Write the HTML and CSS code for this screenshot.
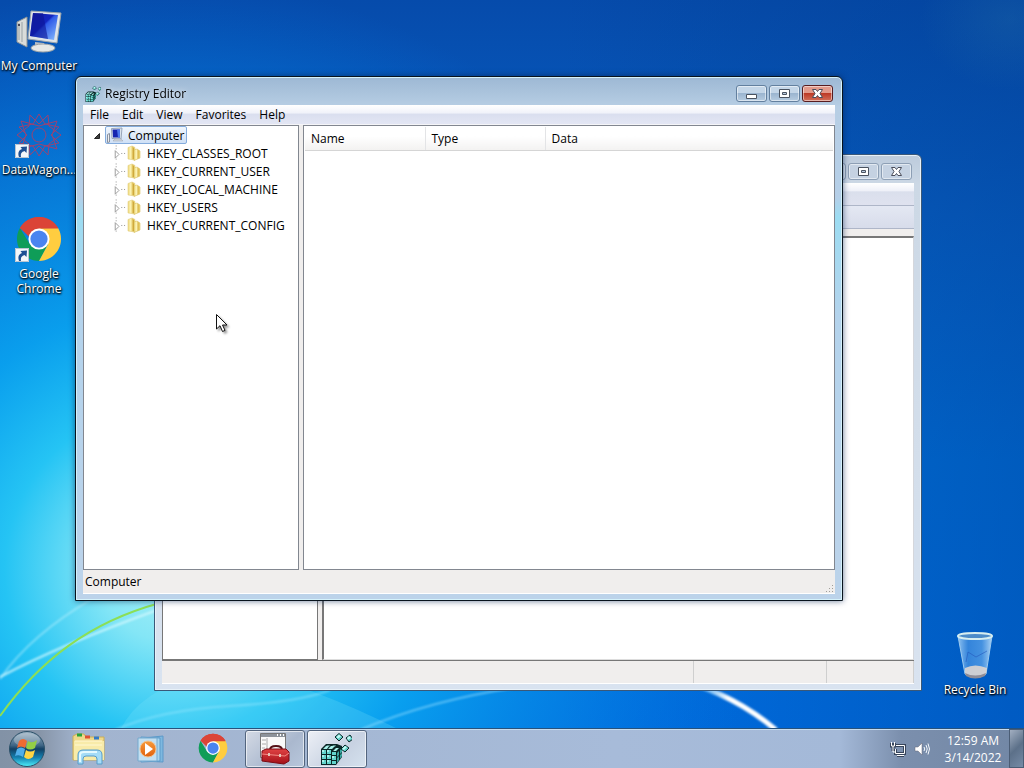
FILE: index.html
```html
<!DOCTYPE html>
<html lang="en">
<head>
<meta charset="utf-8">
<title>Desktop</title>
<link rel="stylesheet" href="styles.css">
</head>
<body>
<svg class="defs" aria-hidden="true">
  <defs>
    <linearGradient id="screen" x1="0" y1="0" x2="1" y2="1"><stop offset="0" stop-color="#1420a8"/><stop offset=".45" stop-color="#1326c0"/><stop offset=".5" stop-color="#2f5be8"/><stop offset="1" stop-color="#8cc0ff"/></linearGradient>
    <linearGradient id="folder" x1="0" x2="1"><stop offset="0" stop-color="#ecd77c"/><stop offset=".4" stop-color="#fdf5b8"/><stop offset=".7" stop-color="#dbb94c"/><stop offset="1" stop-color="#f3df83"/></linearGradient>
    <linearGradient id="bin" x1="0" x2="1"><stop offset="0" stop-color="#a9d4f8" stop-opacity=".85"/><stop offset=".3" stop-color="#4a95e4" stop-opacity=".7"/><stop offset=".7" stop-color="#5ba3ea" stop-opacity=".75"/><stop offset="1" stop-color="#bfe0fa" stop-opacity=".9"/></linearGradient>
    <linearGradient id="orb" x1="0" y1="0" x2="0" y2="1"><stop offset="0" stop-color="#9db3c4"/><stop offset=".4" stop-color="#3d6484"/><stop offset=".5" stop-color="#123f63"/><stop offset=".75" stop-color="#1583b3"/><stop offset="1" stop-color="#4ff0fa"/></linearGradient>
    <linearGradient id="play" x1="0" y1="0" x2="0" y2="1"><stop offset="0" stop-color="#f79a3a"/><stop offset="1" stop-color="#e0600c"/></linearGradient>
    <linearGradient id="redbox" x1="0" y1="0" x2="0" y2="1"><stop offset="0" stop-color="#e04343"/><stop offset="1" stop-color="#a30f18"/></linearGradient>
  </defs>
  <symbol id="chrome" viewBox="0 0 48 48">
    <path d="M24 24 4.100 12.500A23 23 0 0 1 43.900 12.500L24 13Z" fill="#db4437"/>
    <path d="M4.100 12.500A23 23 0 0 0 24 47L33.500 29.500 14.500 29.500Z" fill="#0f9d58"/>
    <path d="M43.900 12.500A23 23 0 0 1 24 47L33.500 29.500 24 13Z" fill="#ffcd40"/>
    <path d="M24 13H43.900L33 24Z" fill="#ffcd40"/>
    <path d="M4.100 12.500A23 23 0 0 1 43.900 12.500V13H24L14 22Z" fill="#db4437"/>
    <circle cx="24" cy="24" r="11" fill="#fff"/><circle cx="24" cy="24" r="9" fill="#4a84f0"/>
  </symbol>
  <symbol id="shortcut" viewBox="0 0 14 14">
    <path d="M0 0h14v14H0z" fill="#f4f7fa"/><path d="M.5.5h13v13H.5z" fill="none" stroke="#b8c4d0"/>
    <path d="M4 13C2.500 8.500 4 6 7 5L5.500 3 12 2.500 11.500 9 9.500 7C6.500 8 5.500 9.500 6 13Z" fill="#1d4f93"/>
  </symbol>
  <symbol id="regedit" viewBox="0 0 32 32">
    <path d="M1 16 6 11H17L22 13V24L16 32H1Z" fill="#0a2626"/>
    <g fill="#62d4cc">
      <path d="M2 17h4v4H2zM7 17h4v4H7zM2 22h4v4H2zM7 22h4v4H7zM12 23h4v4h-4zM2 27h4v4H2zM7 27h4v4H7zM12 28h4v3h-4z"/>
      <path d="M12 19h4v3h-4z"/>
    </g>
    <g fill="#a9f1ea"><path d="M3 16l3-3h3l-2 3zM8 16l3-3h4l-3 3zM6 12.500h4l-1 1zM12 12.500h4l-1 1zM13 18l3-3h3l-3 3z"/><path d="M2 17h2v2H2zM7 17h2v2H7zM2 22h2v2H2zM7 22h2v2H7zM12 23h2v2h-2zM2 27h2v2H2zM7 27h2v2H7z"/></g>
    <path d="M17 20l2-2v4l-2 2zM20 17l2-2v4l-2 2zM17 25l2-2v4l-2 3zM20 22l2-2v3l-2 3z" fill="#3aa8a2"/>
    <g stroke="#0a2626" fill="#5fcfc8"><path d="M19 .5l4 3.500-4 4-4-4zM30 2l3 4-4 3-3-4zM25 12l4 3-4 4-4-3z"/></g>
    <path d="M19 1.500l2 2-3 2-1.500-1.500zM29 3l2 2-3 2-1-2zM25 13l2 1-3 3-2-1z" fill="#c4fbf5"/>
  </symbol>
  <symbol id="pc" viewBox="0 0 48 48">
    <path d="M2 14 12 9V39L2 34Z" fill="#d9dcda" stroke="#8b9296"/><path d="M4 15v17M7 14v20" stroke="#9aa3a6"/>
    <circle cx="4" cy="17" r="1" fill="#223"/>
    <path d="M20 34 29 35 31 39H20Z" fill="#b9bfc4"/><ellipse cx="28" cy="40" rx="12" ry="4" fill="#e5e8e6" stroke="#9ca3a6"/>
    <path d="M16 3 46 5 42 35 13 31Z" fill="#dfe4e8" stroke="#9aa4ac"/><path d="M18 5 43 7 39 32 15 28Z" fill="url(#screen)"/>
    <path d="M18 5h10l5 26-18-3z" fill="#0b1494" opacity=".6"/>
  </symbol>
  <symbol id="folder-icon" viewBox="0 0 16 16">
    <path d="M2 2.500 6 1 9 2.500V15L2 14Z" fill="url(#folder)" stroke="#e3cf7d" stroke-width=".6"/>
    <path d="M8 5 11 4 14 6V13L8 15.500Z" fill="url(#folder)" stroke="#d9c060" stroke-width=".6"/>
    <path d="M7.500 3V14" stroke="#cfa93c"/>
  </symbol>
  <symbol id="min" viewBox="0 0 14 14"><path d="M1.500 7.500h10v4h-10z" fill="#fff" stroke="#4a5360"/></symbol>
  <symbol id="max" viewBox="0 0 14 14"><path d="M1.500 2.500h10v8h-10z" fill="#fff" stroke="#4a5360"/><path d="M4.500 5.500h4v2h-4z" fill="#b9cbe0" stroke="#4a5360"/></symbol>
  <symbol id="close" viewBox="0 0 14 14"><path d="M1.500 2.500H5L6.500 4.500 8 2.500H11.500L9 6.500 11.500 10.500H8L6.500 8.500 5 10.500H1.500L4 6.500Z" fill="#fff" stroke="#4a4d5a"/></symbol>
  <symbol id="branch" viewBox="0 0 16 18"><path d="M5.500 1V5M5.500 15V18M11 9.500H16" stroke="#888" stroke-dasharray="1 2" fill="none"/><path d="M4.500 6.500 8.500 10.500 4.500 14.500Z" fill="#fff" stroke="#999"/></symbol>
</svg>

<main class="desktop">
  <svg class="wallpaper" viewBox="0 0 1024 768" preserveAspectRatio="none" aria-hidden="true">
    <defs>
      <linearGradient id="sky" x1="0" y1="0" x2="0" y2="1"><stop offset="0" stop-color="#064bab"/><stop offset=".28" stop-color="#075fc4"/><stop offset=".6" stop-color="#0070dc"/><stop offset="1" stop-color="#006fe6"/></linearGradient>
      <radialGradient id="glow" gradientUnits="userSpaceOnUse" cx="170" cy="570" r="590"><stop offset="0" stop-color="#a9f0f7"/><stop offset=".12" stop-color="#84e6f6"/><stop offset=".28" stop-color="#25c4f4"/><stop offset=".45" stop-color="#0aa4f0" stop-opacity=".9"/><stop offset=".72" stop-color="#0686e2" stop-opacity=".6"/><stop offset="1" stop-color="#0070dc" stop-opacity="0"/></radialGradient>
      <linearGradient id="shade" x1="0" x2="1"><stop offset=".55" stop-color="#003a86" stop-opacity="0"/><stop offset="1" stop-color="#003c90" stop-opacity=".4"/></linearGradient>
      <radialGradient id="corner"><stop offset="0" stop-color="#2b78a8" stop-opacity=".25"/><stop offset="1" stop-color="#2b78a8" stop-opacity="0"/></radialGradient>
      <linearGradient id="trail" x1="0" x2="1"><stop offset="0" stop-color="#1fa8ff" stop-opacity=".3"/><stop offset=".5" stop-color="#fff"/></linearGradient>
      <filter id="soft"><feGaussianBlur stdDeviation="1"/></filter>
    </defs>
    <path d="M0 0H1024V768H0Z" fill="url(#sky)"/>
    <path d="M0 0H1024V768H0Z" fill="url(#shade)"/>
    <path d="M0 0H1024V768H0Z" fill="url(#glow)"/>
    <ellipse cx="1010" cy="20" rx="90" ry="70" fill="url(#corner)"/>
    <path d="M120 730Q140 690 200 675T400 730Z" fill="#8be9fa" opacity=".2"/>
    <g fill="none" filter="url(#soft)">
      <path d="M0 677Q60 645 160 609" stroke="#d8faff" stroke-width="2" opacity=".8"/>
      <path d="M0 679Q30 635 95 597" stroke="#c5f5ff" stroke-width="2" opacity=".5"/>
      <path d="M115 730Q160 710 230 706T330 690" stroke="#9aeaff" stroke-width="2" opacity=".5"/>
      <path d="M360 730Q430 700 520 687" stroke="#8fdcff" stroke-width="2" opacity=".6"/>
      <path d="M680 680Q735 695 776 730" stroke="url(#trail)" stroke-width="5"/>
    </g>
    <path d="M0 716C40 660 90 622 160 603" stroke="#8cdf55" stroke-width="2" fill="none"/>
  </svg>

  <nav class="shortcuts" aria-label="Desktop shortcuts">
    <a class="shortcut" href="#computer"><svg class="shortcut-art" viewBox="0 0 48 48"><use href="#pc"/></svg><span>My Computer</span></a>
    <a class="shortcut" href="#datawagon"><svg class="shortcut-art" viewBox="0 0 48 48">
      <g fill="none" stroke="#c03a5c" stroke-width="1" opacity=".8">
        <path d="M6 9 24 14 42 9 37 23 42 37 24 32 6 37 11 23ZM24 2 30 12 44 15 36 23 44 31 30 34 24 44 18 34 4 31 12 23 4 15 18 12Z"/>
        <path d="M15 3 24 12 33 3 34 14 46 23 34 32 33 43 24 34 15 43 14 32 2 23 14 14Z"/>
        <circle cx="24" cy="23" r="7"/>
      </g><use href="#shortcut" x="0" y="32" width="14" height="14"/></svg><span>DataWagon...</span></a>
    <a class="shortcut" href="#chrome-app"><svg class="shortcut-art" viewBox="0 0 48 48"><use href="#chrome" x="1" y="0" width="46" height="46"/><use href="#shortcut" x="0" y="32" width="14" height="14"/></svg><span>Google<br>Chrome</span></a>
  </nav>

  <a class="shortcut recycle" href="#bin-folder"><svg class="shortcut-art" viewBox="0 0 48 48">
    <path d="M7 4 41 4 35 42Q25 49 14 42Z" fill="url(#bin)" stroke="#9bcaf0"/>
    <path d="M14 36Q24 31 36 36L35 42Q25 49 14 42Z" fill="#ded6d2" opacity=".9"/><path d="M14 41Q24 46 35 41L34 44Q24 49 15 44Z" fill="#8f8d98"/>
    <path d="M15 30l2-10 8 5 11-6" fill="none" stroke="#2458bd" opacity=".6"/>
    <ellipse cx="24" cy="4" rx="17" ry="3" fill="#4c8cc9" stroke="#d6eef0" stroke-width="2"/></svg><span>Recycle Bin</span></a>

  <section class="window window-back" aria-label="Background window">
    <header class="titlebar">
      <div class="controls">
        <button class="control" aria-label="Minimize"><svg><use href="#min"/></svg></button>
        <button class="control" aria-label="Maximize"><svg><use href="#max"/></svg></button>
        <button class="control" aria-label="Close"><svg><use href="#close"/></svg></button>
      </div>
    </header>
    <div class="client">
      <div class="strip strip-menu"></div>
      <div class="strip strip-tools"></div>
      <div class="back-panes"><div class="back-tree"></div><div class="back-list"></div></div>
      <footer class="back-status"><span></span><span></span><span></span></footer>
    </div>
  </section>

  <section class="window window-main" aria-label="Registry Editor">
    <header class="titlebar">
      <svg class="title-icon"><use href="#regedit"/></svg>
      <h1 class="title">Registry Editor</h1>
      <div class="controls">
        <button class="control" aria-label="Minimize"><svg><use href="#min"/></svg></button>
        <button class="control" aria-label="Maximize"><svg><use href="#max"/></svg></button>
        <button class="control control-close" aria-label="Close"><svg><use href="#close"/></svg></button>
      </div>
    </header>
    <div class="client">
      <nav class="menubar"><button>File</button><button>Edit</button><button>View</button><button>Favorites</button><button>Help</button></nav>
      <div class="panes">
        <ul class="tree">
          <li class="root"><svg class="arrow" viewBox="0 0 8 8"><path d="M6.500 2.500V7.500H1.500Z" fill="#404040" stroke="#222"/></svg><button class="node node-selected"><svg class="node-icon" viewBox="0 0 20 16"><path d="M1.500 7.500 3.500 6.500V15L1.500 15.500Z" fill="#eee" stroke="#8790a0"/><path d="M5.500 1.500 16 1 15 12 6 11.500Z" fill="#dbe4ee" stroke="#98a5b8"/><path d="M6.500 2.500H14V10.500H7Z" fill="#1625b0"/><path d="M11 2.500H14V10.500H12Z" fill="#4d78ec"/><path d="M9 12h6l2 2H7z" fill="#d0d5dc" stroke="#9ba2ae" stroke-width=".5"/></svg>Computer</button></li>
          <li class="key"><svg class="branch"><use href="#branch"/></svg><button class="node"><svg class="folder"><use href="#folder-icon"/></svg>HKEY_CLASSES_ROOT</button></li>
          <li class="key"><svg class="branch"><use href="#branch"/></svg><button class="node"><svg class="folder"><use href="#folder-icon"/></svg>HKEY_CURRENT_USER</button></li>
          <li class="key"><svg class="branch"><use href="#branch"/></svg><button class="node"><svg class="folder"><use href="#folder-icon"/></svg>HKEY_LOCAL_MACHINE</button></li>
          <li class="key"><svg class="branch"><use href="#branch"/></svg><button class="node"><svg class="folder"><use href="#folder-icon"/></svg>HKEY_USERS</button></li>
          <li class="key"><svg class="branch"><use href="#branch"/></svg><button class="node"><svg class="folder"><use href="#folder-icon"/></svg>HKEY_CURRENT_CONFIG</button></li>
        </ul>
        <div class="list">
          <table class="values"><thead><tr><th class="col">Name</th><th class="col">Type</th><th>Data</th></tr></thead></table>
        </div>
      </div>
      <footer class="status"><span>Computer</span><svg class="grip" viewBox="0 0 9 9"><path d="M7 1h1v1H7zM4 4h1v1H4zM7 4h1v1H7zM1 7h1v1H1zM4 7h1v1H4zM7 7h1v1H7z" fill="#a09d98"/></svg></footer>
    </div>
  </section>
  <svg class="cursor" viewBox="0 0 14 20" aria-hidden="true"><path d="M1.500 1.500V16L5 12.700 7.500 18.500 10 17.400 7.500 12H12Z" fill="#fff" stroke="#111"/></svg>
</main>

<footer class="taskbar">
  <button class="start" aria-label="Start"><svg viewBox="0 0 38 38"><circle cx="19" cy="19" r="17.500" fill="url(#orb)" stroke="#2b5068"/><ellipse cx="19" cy="10" rx="13" ry="7" fill="#fff" opacity=".25"/>
    <path d="M11 11Q15 7 19 11L17 18Q13 15 9 18Z" fill="#ef6b32"/><path d="M20 11Q24 14 29 10L27 18Q22 21 18 18Z" fill="#93ce45"/><path d="M9 19Q13 16 17 19L15 27Q11 24 7 26Z" fill="#50aeea"/><path d="M18 20Q22 23 27 20L25 27Q20 31 16 27Z" fill="#ffd544"/></svg></button>
  <div class="tasks">
    <button class="task" aria-label="Windows Explorer"><svg viewBox="0 0 36 36"><path d="M2 5 6 3H13L15 6H33V29H2Z" fill="#efd88a" stroke="#c9ad58"/><path d="M6 4h5" stroke="#28a33b" stroke-width="3"/><path d="M14 6h5" stroke="#df5131" stroke-width="3"/><path d="M23 7h5" stroke="#337ac8" stroke-width="3"/><path d="M3 10H33V29H3Z" fill="#f8eba9"/><path d="M4 10h27M4 14h27" stroke="#fff8d3"/><path d="M7 33V24Q7 19 12 19H26Q31 19 31 24V33H26V28Q26 25 23 25H15Q12 25 12 28V33Z" fill="#a5dcf7" stroke="#569cc9"/><path d="M9 31V24Q9 21 13 21H26" fill="none" stroke="#e5faff" stroke-width="2"/></svg></button>
    <button class="task" aria-label="Windows Media Player"><svg viewBox="0 0 36 36"><path d="M10 7 30 5V31L10 30Z" fill="#7eb8df" stroke="#5c99c9"/><path d="M8 6 27 7V30L8 31Z" fill="#a7d5ef" stroke="#5c99c9"/><path d="M5 7H24V30H5Z" fill="#c2dff1" stroke="#75a9ce"/><circle cx="15" cy="18" r="8" fill="url(#play)" stroke="#efc291"/><path d="M12 12 20 18 12 24Z" fill="#fff"/></svg></button>
    <button class="task" aria-label="Google Chrome"><svg viewBox="0 0 36 36"><use href="#chrome" x="3" y="2" width="30" height="30"/></svg></button>
    <button class="task task-open" aria-label="Toolbox"><svg viewBox="0 0 36 36"><path d="M3.500 2.500h25v24h-25z" fill="#f9f9f9" stroke="#777"/><path d="M4 3h24v3H4z" fill="#8d939b"/><path d="M20 4h1M23 4h1M26 4h1" stroke="#fff" stroke-width="2"/><path d="M10 7v18M5 9h4M5 13h4M5 17h3" stroke="#aaa"/><path d="M13 19Q13 15 19 15T25 19" fill="none" stroke="#531016" stroke-width="2"/><path d="M5 20 9 18H29L32 21V30L27 33 5 30Z" fill="url(#redbox)" stroke="#7b0b14"/><path d="M5 23 28 25 32 22" fill="none" stroke="#f38b84"/><path d="M11 22h2v3h-2zM22 23h2v3h-2z" fill="#e6c5b8"/></svg></button>
    <button class="task task-open task-active" aria-label="Registry Editor"><svg viewBox="0 0 36 36"><use href="#regedit" x="1" y="2" width="32" height="32"/></svg></button>
  </div>
  <div class="tray">
    <svg class="tray-icon" viewBox="0 0 16 16"><g fill="none" stroke="#37455b" stroke-width="3"><path d="M6 4.500H14.500V12.500H5.500V8M7 14.500h7M1.500 2v3h3V2M3 5v5"/></g><g fill="none" stroke="#fff"><path d="M6 4.500H14.500V12.500H5.500V8M7 14.500h7M1.500 1v4h3V1M3 5v6h2"/></g></svg>
    <svg class="tray-icon" viewBox="0 0 16 16"><path d="M1 6H4L8 2V14L4 10H1Z" fill="#fff" stroke="#667" stroke-width=".5"/><path d="M10 6Q11.500 8 10 10M12 4Q14.500 8 12 12M14 2.500Q17 8 14 13.500" fill="none" stroke="#f4f8fc"/></svg>
    <div class="clock"><time>12:59 AM</time><time>3/14/2022</time></div>
  </div>
  <button class="show-desktop" aria-label="Show desktop"></button>
</footer>
</body>
</html>
```
FILE: styles.css
```css
* { box-sizing: border-box; }
body {
  margin: 0;
  height: 100vh;
  display: flex;
  flex-direction: column;
  overflow: hidden;
  background: #0a6cd0;
  color: #000;
  font: 12px/15px "Open Sans", "Noto Sans", sans-serif;
}
button {
  margin: 0;
  padding: 0;
  border: 0;
  background: none;
  color: inherit;
  font: inherit;
}
svg { display: block; overflow: visible; }
.defs { position: absolute; width: 0; height: 0; }

.desktop { position: relative; flex: 1; }
.wallpaper { position: absolute; top: 0; left: 0; width: 100vw; height: 100vh; }

.shortcuts { position: absolute; top: 0; left: 0; display: flex; flex-direction: column; }
.shortcut {
  width: 78px;
  height: 104px;
  padding-top: 8px;
  display: flex;
  flex-direction: column;
  align-items: center;
  gap: 2px;
  color: #fff;
  text-align: center;
  text-decoration: none;
  white-space: nowrap;
  text-shadow: 1px 1px 2px #000, 0 1px 2px #000;
}
.shortcut-art { width: 48px; height: 48px; flex: none; }
.recycle { position: absolute; right: 10px; bottom: 0; }

.window {
  position: absolute;
  display: flex;
  flex-direction: column;
  padding: 0 7px 6px;
  border: 1px solid #08131d;
  border-radius: 6px 6px 0 0;
}
.window-main {
  top: 76px;
  right: 181px;
  bottom: 127px;
  left: 75px;
  background: linear-gradient(#9db8d4, #b7cee4 30px, #b5cfe8 120px, #9cdcf2 140px, #b4d3ec 240px, #bcd3ea);
  box-shadow: inset 0 0 0 1px #d5f2fb, 0 0 6px #00205099;
}
.window-back {
  top: 154px;
  right: 102px;
  bottom: 37px;
  left: 154px;
  border-color: #3a5878;
  background: linear-gradient(#bccbdc, #ccd8e5 30px, #d9e3f0);
  box-shadow: inset 0 0 0 1px #e8f1f8;
}
.titlebar {
  height: 28px;
  flex: none;
  display: flex;
  align-items: center;
  gap: 4px;
  padding: 5px 2px 0;
}
.title-icon { width: 16px; height: 16px; }
.title { margin: 0; font: inherit; text-shadow: 0 0 6px #fff; }
.controls { display: flex; gap: 2px; margin-left: auto; }
.control {
  width: 31px;
  height: 17px;
  display: grid;
  place-items: center;
  border: 1px solid #63809f;
  border-radius: 3px;
  background: linear-gradient(#c4d6e8 45%, #9bb5d0 50%, #b6cce1);
  box-shadow: inset 0 0 0 1px #ffffff80;
}
.control svg { width: 14px; height: 14px; }
.control-close {
  border-color: #571d20;
  background: linear-gradient(#e29a8b 45%, #bd3a26 50%, #d3705a);
}
.window-back .control {
  border-color: #8d9fb5;
  background: #c5d2e2;
}
.client { flex: 1; min-height: 0; display: flex; flex-direction: column; background: #f0eeed; }
.menubar {
  height: 20px;
  flex: none;
  display: flex;
  align-items: center;
  gap: 13px;
  padding: 0 0 1px 7px;
  background: linear-gradient(#fff, #f1f3fa 40%, #dadfef 50%, #e3e6f4);
  border-bottom: 1px solid #f5f5f8;
}
.panes { flex: 1; min-height: 0; display: flex; gap: 4px; }
.tree {
  width: 216px;
  flex: none;
  margin: 0;
  padding: 0;
  list-style: none;
  background: #fff;
  border: 1px solid #828790;
}
.tree li { display: flex; align-items: center; height: 18px; }
.root { padding-left: 9px; gap: 4px; }
.key { padding-left: 27px; }
.arrow { width: 8px; height: 8px; }
.branch { width: 15px; height: 18px; }
.node { height: 18px; display: flex; align-items: center; gap: 5px; }
.node-selected {
  gap: 2px;
  padding-right: 1px;
  border: 1px solid #84acdd;
  border-radius: 2px;
  background: linear-gradient(#f1f6fd, #cfe0f6);
}
.node-icon { width: 20px; height: 16px; }
.folder { width: 16px; height: 16px; }
.list { flex: 1; padding: 1px; background: #fff; border: 1px solid #828790; }
.values { width: 100%; border-collapse: collapse; table-layout: fixed; }
.values th {
  height: 23px;
  padding: 0 6px;
  font-weight: 400;
  text-align: left;
  background: linear-gradient(#fff 40%, #f3f2f1);
  border-bottom: 1px solid #d5d5d5;
}
.values .col { width: 120px; border-right: 1px solid #e3e4e6; }
.status {
  height: 24px;
  flex: none;
  display: flex;
  align-items: center;
  justify-content: space-between;
  padding: 0 1px 0 2px;
  border-bottom: 1px solid #fff;
}
.grip { width: 9px; height: 9px; align-self: flex-end; }

.strip { flex: none; border-bottom: 1px solid #aeb6c8; }
.strip-menu { height: 23px; background: linear-gradient(#fff, #eef0f8 36%, #dadfec 40%, #dfe2ef); }
.strip-tools { height: 23px; background: linear-gradient(#e4e8f3, #d7dcea); }
.back-panes { flex: 1; min-height: 0; display: flex; gap: 4px; padding-top: 7px; }
.back-tree { width: 156px; background: #fff; border: 1px solid #777; }
.back-list { flex: 1; background: #fff; border: 2px solid #777; border-right: 1px solid #d5d7dc; border-bottom: 1px solid #ddd; }
.back-status { height: 24px; flex: none; display: flex; border-top: 1px solid #777; border-bottom: 1px solid #fff; }
.back-status span { border-right: 1px solid #cfcfcf; width: 87px; }
.back-status span:first-child { flex: 1; }
.back-status span:nth-child(2) { width: 133px; }
.cursor { position: absolute; left: 215px; top: 313px; width: 14px; height: 20px; filter: drop-shadow(2px 2px 1px #0006); }

.taskbar {
  position: relative;
  height: 40px;
  flex: none;
  display: flex;
  align-items: stretch;
  border-top: 1px solid #28527c;
  background: linear-gradient(90deg, #8292a6, #8795a8 40px, #a2b4cf 80px, #a7bbd9 60%, #a4b9d8 82%, #7b8fad 88%, #7287a5);
  box-shadow: inset 0 1px 0 #c6dcef;
}
.start { width: 38px; height: 38px; margin: 1px 13px 0 8px; }
.tasks { display: flex; gap: 2px; flex: 1; padding-top: 1px; }
.task { width: 60px; display: grid; place-items: center; border-radius: 3px; }
.task svg { width: 36px; height: 36px; }
.task-open {
  border: 1px solid #53657e;
  background: linear-gradient(135deg, #d4dae5, #aab8ce 60%, #b8c7dc);
  box-shadow: inset 0 0 0 1px #ffffff99;
}
.task-active { background: linear-gradient(135deg, #edf0f6, #c8d2e2 60%, #d5e2ee); }
.tray { display: flex; align-items: center; gap: 8px; padding-right: 9px; color: #fff; }
.tray-icon { width: 16px; height: 16px; }
.clock { width: 54px; margin-left: 8px; display: flex; flex-direction: column; align-items: center; line-height: 17px; white-space: nowrap; }
.show-desktop { width: 15px; border: 1px solid #4b5d75; background: linear-gradient(135deg, #a2afc1, #5c7089 50%, #768ba6); }
```
